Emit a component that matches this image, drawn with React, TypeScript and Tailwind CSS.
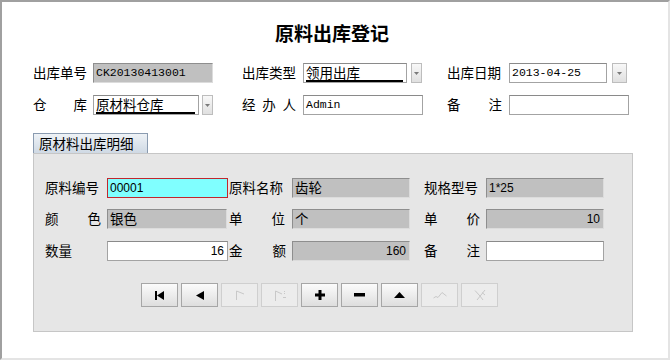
import React from 'react';

const cjk = "font-['Noto_Sans_CJK_SC',sans-serif]";

type FieldProps = {
  w: string;
  kind?: 'gray' | 'white' | 'cyan';
  right?: boolean;
  font?: string;
  children?: React.ReactNode;
};

const Field: React.FC<FieldProps> = ({ w, kind = 'white', right, font, children }) => {
  let box = 'bg-white border border-[#a3a3a3] border-t-[#8a8a8a]';
  if (kind == 'gray') box = 'bg-[#c0c0c0] border border-t-[#8e8e8e] border-l-[#8e8e8e] border-r-[#dcdcdc] border-b-[#dcdcdc]';
  if (kind == 'cyan') box = 'bg-[#80ffff] border border-[#c0272d]';
  return (
    <div
      className={`${w} h-[20px] ${box} flex items-center px-[2px] text-black leading-none overflow-hidden ${
        right ? 'justify-end pr-[3px]' : ''
      } ${font ?? cjk + ' text-[13.5px]'}`}
    >
      {children}
    </div>
  );
};

const Label: React.FC<{ w: string; text: string; spread?: boolean }> = ({ w, text, spread }) => (
  <div
    className={`${w} h-[20px] flex items-center ${spread ? 'justify-between' : ''} ${cjk} text-[13.5px] text-black leading-none`}
  >
    {spread ? text.split('').map((c, i) => <span key={i}>{c}</span>) : text}
  </div>
);

const Drop: React.FC<{ w: string; ml: string }> = ({ w, ml }) => (
  <div
    className={`${w} ${ml} h-[20px] border border-[#bdbdbd] bg-gradient-to-b from-[#f8f8f8] to-[#e0e0e0] flex items-center justify-center`}
  >
    <svg width="5" height="3" viewBox="0 0 5 3">
      <path d="M0 0h5L2.5 3z" fill="#7a7a7a" />
    </svg>
  </div>
);

const Select: React.FC<{ w: string; text: string }> = ({ w, text }) => (
  <div className={`${w} h-[20px] bg-white border border-[#a3a3a3] border-t-[#8a8a8a] pl-[2px] pr-[3px] flex`}>
    <div className={`flex-1 border-b-2 border-black ${cjk} text-[13.5px] leading-[16px] text-black`}>
      {text}
    </div>
  </div>
);

const mono = "font-['Liberation_Mono',monospace] text-[11.5px]";
const sans = "font-['Liberation_Sans',sans-serif] text-[12px]";

const NavButton: React.FC<{ off?: boolean; children: React.ReactNode }> = ({ off, children }) => (
  <div
    className={`w-[37px] h-[24px] flex items-center justify-center border ${
      off ? 'border-[#cfcfcf] bg-[#ececec]' : 'border-[#a6a6a6] bg-gradient-to-b from-[#fbfbfb] to-[#dedede]'
    }`}
  >
    {children}
  </div>
);

export default function App() {
  return (
    <div className="w-[670px] h-[360px] bg-white border-2 border-l-[#a0a0a0] border-t-[#a0a0a0] border-r-[#e4e4e4] border-b-[#e4e4e4] overflow-hidden">
      <div className={`pt-[19px] pr-[6px] text-center ${cjk} text-[19px] font-bold leading-[24px] text-black`}>
        原料出库登记
      </div>

      <div className="mt-[18px] pl-[31px] flex items-center">
        <Label w="w-[54px]" text="出库单号" />
        <div className="ml-[6px]">
          <Field w="w-[120px]" kind="gray" font={mono}>CK20130413001</Field>
        </div>
        <div className="ml-[29px]">
          <Label w="w-[54px]" text="出库类型" />
        </div>
        <div className="ml-[7px]">
          <Select w="w-[104px]" text="领用出库" />
        </div>
        <Drop w="w-[11px]" ml="ml-[4px]" />
        <div className="ml-[25px]">
          <Label w="w-[55px]" text="出库日期" />
        </div>
        <div className="ml-[7px]">
          <Field w="w-[98px]" font={mono}>2013-04-25</Field>
        </div>
        <Drop w="w-[15px]" ml="ml-[5px]" />
      </div>

      <div className="mt-[12px] pl-[31px] flex items-center">
        <Label w="w-[54px]" text="仓库" spread />
        <div className="ml-[6px]">
          <Select w="w-[106px]" text="原材料仓库" />
        </div>
        <Drop w="w-[11px]" ml="ml-[3px]" />
        <div className="ml-[29px]">
          <Label w="w-[54px]" text="经办人" spread />
        </div>
        <div className="ml-[7px]">
          <Field w="w-[120px]" font={mono}>Admin</Field>
        </div>
        <div className="ml-[24px]">
          <Label w="w-[55px]" text="备注" spread />
        </div>
        <div className="ml-[7px]">
          <Field w="w-[120px]" />
        </div>
      </div>

      <div className="mt-[18px] ml-[31px] w-[600px]">
        <div
          className={`w-[115px] h-[20px] border border-b-0 border-[#8a9bb0] bg-gradient-to-b from-[#eef2f6] to-[#cfd9e4] flex items-center pl-[5px] ${cjk} text-[13.5px] leading-none text-black`}
        >
          原材料出库明细
        </div>
        <div className="h-[179px] border border-[#c6c6c6] bg-[#e6e6e6] pt-[24px] pl-[11px]">
          <div className="flex items-center">
            <Label w="w-[56px]" text="原料编号" />
            <div className="ml-[6px]">
              <Field w="w-[121px]" kind="cyan" font={sans}>00001</Field>
            </div>
            <div className="ml-[1px]">
              <Label w="w-[57px]" text="原料名称" />
            </div>
            <div className="ml-[6px]">
              <Field w="w-[118px]" kind="gray">齿轮</Field>
            </div>
            <div className="ml-[14px]">
              <Label w="w-[56px]" text="规格型号" />
            </div>
            <div className="ml-[6px]">
              <Field w="w-[118px]" kind="gray" font={sans}>1*25</Field>
            </div>
          </div>

          <div className="mt-[11px] flex items-center">
            <Label w="w-[56px]" text="颜色" spread />
            <div className="ml-[6px]">
              <Field w="w-[120px]" kind="gray">银色</Field>
            </div>
            <div className="ml-[2px]">
              <Label w="w-[56px]" text="单位" spread />
            </div>
            <div className="ml-[7px]">
              <Field w="w-[118px]" kind="gray">个</Field>
            </div>
            <div className="ml-[14px]">
              <Label w="w-[56px]" text="单价" spread />
            </div>
            <div className="ml-[6px]">
              <Field w="w-[118px]" kind="gray" right font={sans}>10</Field>
            </div>
          </div>

          <div className="mt-[12px] flex items-center">
            <Label w="w-[56px]" text="数量" />
            <div className="ml-[6px]">
              <Field w="w-[121px]" right font={sans}>16</Field>
            </div>
            <div className="ml-[1px]">
              <Label w="w-[57px]" text="金额" spread />
            </div>
            <div className="ml-[6px]">
              <Field w="w-[118px]" kind="gray" right font={sans}>160</Field>
            </div>
            <div className="ml-[14px]">
              <Label w="w-[56px]" text="备注" spread />
            </div>
            <div className="ml-[6px]">
              <Field w="w-[118px]" />
            </div>
          </div>

          <div className="mt-[22px] ml-[96px] flex gap-[3px]">
            <NavButton>
              <svg width="11" height="9" viewBox="0 0 11 9">
                <rect x="1" y="0" width="2" height="9" fill="#000" />
                <path d="M3 4.5L10 0v9z" fill="#000" />
              </svg>
            </NavButton>
            <NavButton>
              <svg width="8" height="9" viewBox="0 0 8 9">
                <path d="M0 4.5L8 0v9z" fill="#000" />
              </svg>
            </NavButton>
            <NavButton off>
              <svg width="10" height="10" viewBox="0 0 10 10" fill="none" stroke="#c8c8c8" strokeWidth="1">
                <path d="M1.5 10V1L9 4" />
              </svg>
            </NavButton>
            <NavButton off>
              <svg width="12" height="11" viewBox="0 0 12 11" fill="none" stroke="#c8c8c8" strokeWidth="1">
                <path d="M1.5 11V1L8 4" />
                <path d="M10.5 1v4" strokeDasharray="1 1" />
                <path d="M9 7.5h3" />
              </svg>
            </NavButton>
            <NavButton>
              <svg width="10" height="10" viewBox="0 0 10 10">
                <path d="M3.5 0h3v3.5H10v3H6.5V10h-3V6.5H0v-3h3.5z" fill="#000" />
              </svg>
            </NavButton>
            <NavButton>
              <svg width="11" height="4" viewBox="0 0 11 4">
                <rect width="11" height="3.5" fill="#000" />
              </svg>
            </NavButton>
            <NavButton>
              <svg width="11" height="6" viewBox="0 0 11 6">
                <path d="M0 6L5.5 0L11 6z" fill="#000" />
              </svg>
            </NavButton>
            <NavButton off>
              <svg width="14" height="8" viewBox="0 0 14 8" fill="none" stroke="#c8c8c8" strokeWidth="1">
                <path d="M0.5 7L3 5.5L5 6.5L9 1.5L13.5 5" />
              </svg>
            </NavButton>
            <NavButton off>
              <svg width="12" height="12" viewBox="0 0 12 12" fill="none" stroke="#c8c8c8" strokeWidth="1">
                <path d="M1 1.5L6 7L9 11" />
                <path d="M11 1L3 11" />
                <path d="M8 3.5L11 6" />
              </svg>
            </NavButton>
          </div>
        </div>
      </div>
    </div>
  );
}
